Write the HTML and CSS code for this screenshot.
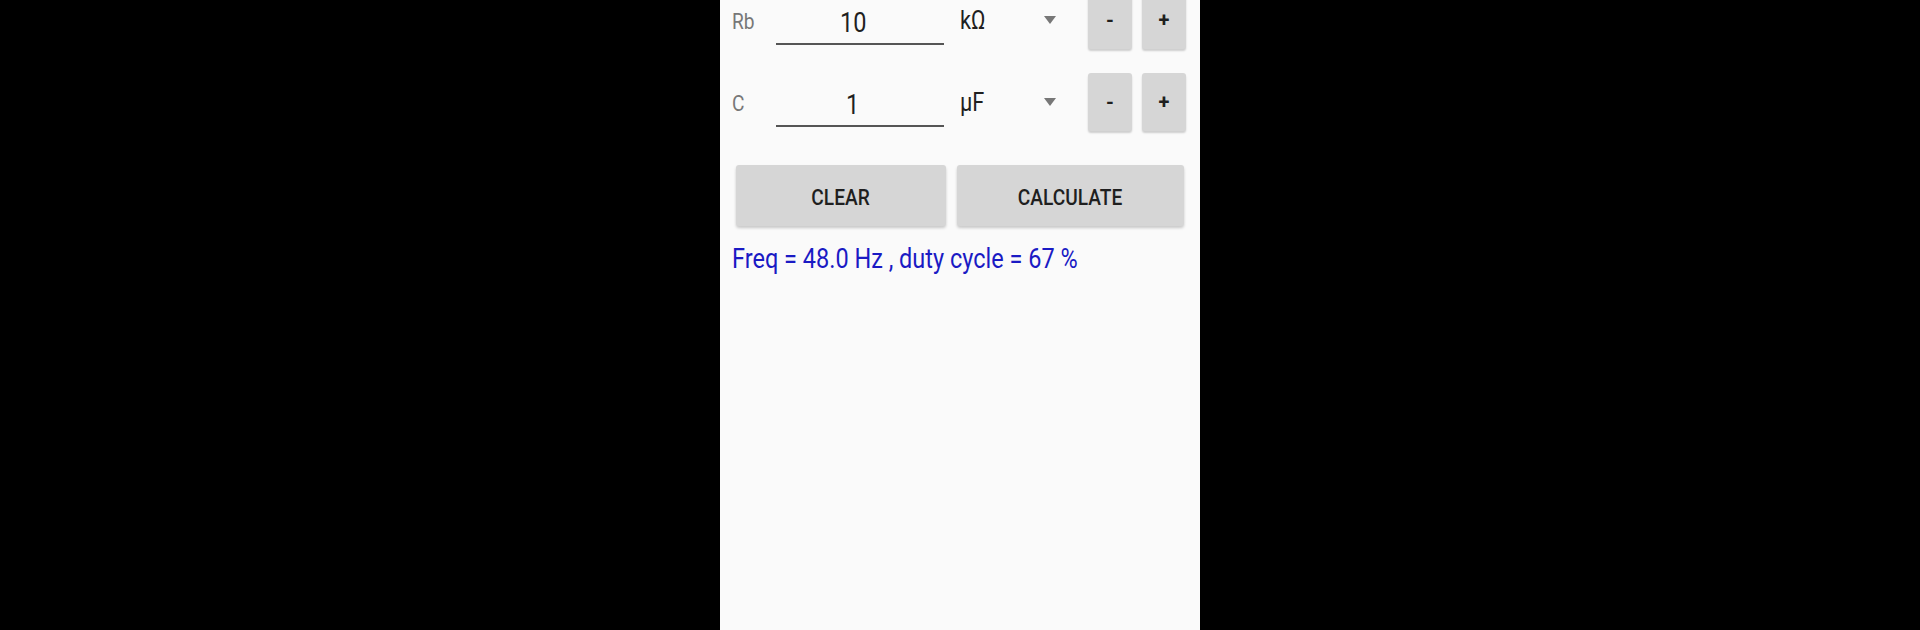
FILE: index.html
```html
<!DOCTYPE html>
<html>
<head>
<meta charset="utf-8">
<link rel="stylesheet" href="styles.css">
</head>
<body>
<div class="screen">
  <div class="content">
    <div class="row">
      <div class="label"><span class="t">Rb</span></div>
      <div class="field"><span class="t">10</span></div>
      <div class="unit"><span class="t">kΩ</span></div>
      <div class="spinner"><span class="tri"></span></div>
      <div class="step">-</div>
      <div class="step plus">+</div>
    </div>
    <div class="row">
      <div class="label"><span class="t">C</span></div>
      <div class="field"><span class="t">1</span></div>
      <div class="unit"><span class="t">μF</span></div>
      <div class="spinner"><span class="tri"></span></div>
      <div class="step">-</div>
      <div class="step plus">+</div>
    </div>
    <div class="actions">
      <div class="btn clear"><span class="t">CLEAR</span></div>
      <div class="btn calc"><span class="t">CALCULATE</span></div>
    </div>
    <div class="result"><span class="t">Freq = 48.0 Hz , duty cycle = 67 %</span></div>
  </div>
</div>
</body>
</html>
```
FILE: styles.css
```css
html, body {
  margin: 0;
  padding: 0;
  background: #000;
  height: 630px;
  overflow: hidden;
}
body {
  display: flex;
  justify-content: center;
  font-family: Roboto, "Liberation Sans", sans-serif;
}
.screen {
  width: 480px;
  height: 630px;
  background: #fafafa;
  overflow: hidden;
}
.content {
  margin-top: -21px;
  padding: 0 14px 0 12px;
}
.t {
  display: inline-block;
  transform: scaleX(0.87);
  transform-origin: left center;
  white-space: nowrap;
}
.row {
  height: 82px;
  display: flex;
  align-items: center;
}
.row > div {
  flex-shrink: 0;
}
.label {
  width: 44px;
  color: #777;
  font-size: 22px;
  margin-top: 2px;
}
.field {
  width: 168px;
  height: 48px;
  border-bottom: 2px solid #555;
  box-sizing: border-box;
  display: flex;
  justify-content: center;
  align-items: center;
  margin-top: 2px;
  color: #1f1f1f;
  font-size: 27px;
  padding-top: 6px;
  padding-right: 14px;
}
.field .t,
.btn .t {
  transform-origin: center center;
}
.unit {
  margin-left: 16px;
  width: 84px;
  font-size: 25px;
  color: #1f1f1f;
}
.spinner {
  width: 44px;
  display: flex;
  align-items: center;
}
.tri {
  width: 0;
  height: 0;
  border-left: 6.5px solid transparent;
  border-right: 6.5px solid transparent;
  border-top: 8px solid #777;
}
.step {
  width: 44px;
  height: 58px;
  background: #d6d6d6;
  border-radius: 3px;
  box-shadow: 0 2px 2px rgba(0,0,0,0.18);
  display: flex;
  align-items: center;
  justify-content: center;
  font-size: 20px;
  font-weight: 700;
  color: #1f1f1f;
}
.step.plus {
  margin-left: 10px;
}
.actions {
  display: flex;
  gap: 11px;
  margin-top: 22px;
  padding-left: 4px;
}
.btn {
  height: 61px;
  background: #d6d6d6;
  border-radius: 3px;
  box-shadow: 0 2px 3px rgba(0,0,0,0.2);
  display: flex;
  align-items: center;
  justify-content: center;
  font-size: 22px;
  font-weight: 500;
  color: #1f1f1f;
  padding-top: 3px;
  box-sizing: border-box;
}
.clear { width: 210px; }
.calc { width: 227px; }
.result {
  margin-top: 17px;
  font-size: 27px;
  line-height: 32px;
  color: #1a1ac4;
}
```
